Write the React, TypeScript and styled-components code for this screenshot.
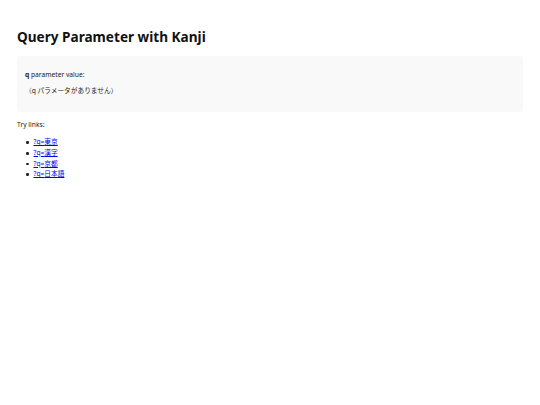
import * as React from 'react'
import styled, { createGlobalStyle } from 'styled-components'

const Global = createGlobalStyle`
  html, body { margin: 0; padding: 0; background: #fff; }
  body { font-family: "Noto Sans", "Noto Sans CJK JP", sans-serif; color: #222; }
`

const Page = styled.div`
  padding: 28px 17px 0 17px;
`

const Title = styled.h1`
  margin: 0 0 10px 0;
  font-size: 13.6px;
  line-height: 18px;
  font-weight: 700;
  color: #111;
`

const Panel = styled.div`
  background: #f9f9f9;
  border-radius: 4px;
  padding: 14px 8px 16px 8px;
`

const Line = styled.p`
  margin: 0 0 6px 0;
  font-size: 6.7px;
  line-height: 10px;
  &:last-child { margin-bottom: 0; }
`

const Label = styled.p`
  margin: 8px 0 7.4px 0;
  font-size: 6.7px;
  line-height: 10px;
`

const Links = styled.ul`
  margin: 0;
  padding-left: 9px;
  list-style: none;
  font-size: 6.7px;
  line-height: 10.6px;
`

const Item = styled.li`
  display: flex;
  align-items: center;
  gap: 5px;
  &::before {
    content: '';
    width: 2.5px;
    height: 2.5px;
    border-radius: 50%;
    background: #222;
  }
`

const Link = styled.a`
  color: #0000ee;
`

const queries = ['東京', '漢字', '京都', '日本語']

export default function App() {
  return (
    <Page>
      <Global />
      <Title>Query Parameter with Kanji</Title>
      <Panel>
        <Line><strong>q</strong> parameter value:</Line>
        <Line>（q パラメータがありません）</Line>
      </Panel>
      <Label>Try links:</Label>
      <Links>
        {queries.map(q => (
          <Item key={q}><Link href={`?q=${q}`}>?q={q}</Link></Item>
        ))}
      </Links>
    </Page>
  )
}
